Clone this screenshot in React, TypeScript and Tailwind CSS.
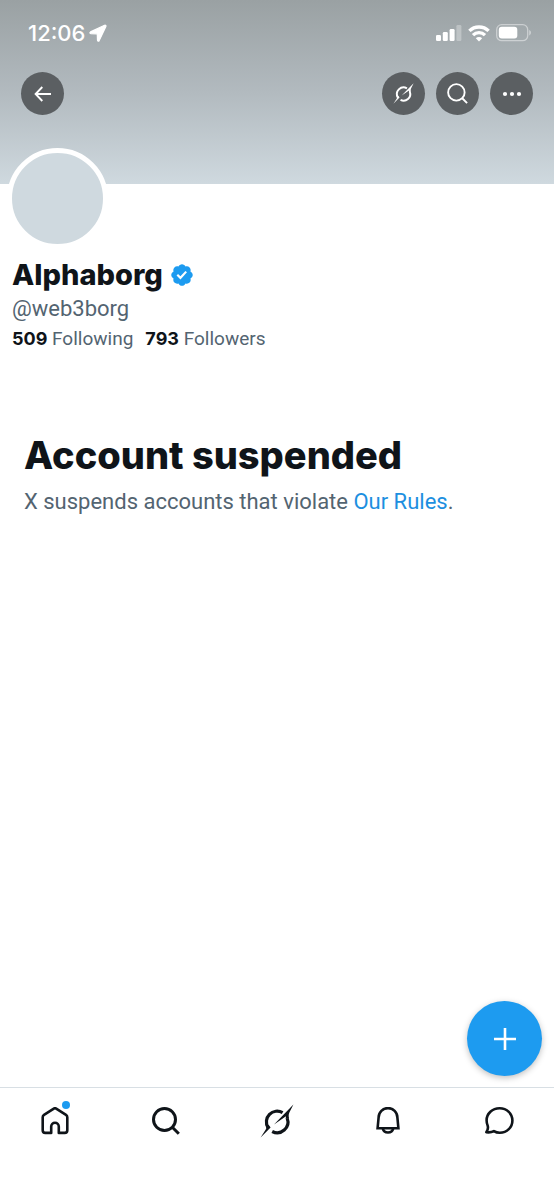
import type { ReactNode } from 'react';

interface IconProps {
  className?: string;
}

function LocationIcon({ className }: IconProps) {
  return (
    <svg viewBox="0 0 18 18" className={className} fill="currentColor" stroke="currentColor" strokeWidth="1.2" strokeLinejoin="round" aria-hidden="true">
      <path d="M15.6 1.2 1.5 7.9c-.9.5-.8 1.6.3 1.7l6 .2c.3 0 .5.2.5.5l.2 6c0 1.1 1.2 1.2 1.7.3L16.9 2.5c.4-.9-.4-1.700-1.300-1.300z" />
    </svg>
  );
}

function SignalIcon({ className }: IconProps) {
  return (
    <svg viewBox="0 0 26 17" className={className} fill="currentColor" aria-hidden="true">
      <rect x="0" y="10" width="5" height="6" rx="1.3" />
      <rect x="6.8" y="7" width="5" height="9" rx="1.3" />
      <rect x="13.6" y="4" width="5" height="12" rx="1.3" />
      <rect x="20.4" y="0" width="5" height="16" rx="1.3" opacity=".3" />
    </svg>
  );
}

function WifiIcon({ className }: IconProps) {
  return (
    <svg viewBox="0 0 22 17" className={className} fill="none" stroke="currentColor" strokeWidth="3.4" aria-hidden="true">
      <path d="M1.4 5.9a13.6 13.6 0 0 1 19.2 0" />
      <path d="M5 10.1a8.6 8.6 0 0 1 12 0" />
      <path d="m11 16.6-3.2-3.3a4.6 4.6 0 0 1 6.4 0z" fill="currentColor" stroke="none" />
    </svg>
  );
}

function BatteryIcon({ className }: IconProps) {
  return (
    <svg viewBox="0 0 36 18" className={className} fill="none" aria-hidden="true">
      <rect x=".7" y=".7" width="31" height="16" rx="5" stroke="currentColor" strokeWidth="1.3" opacity=".45" />
      <rect x="2.8" y="2.8" width="18.5" height="11.8" rx="3" fill="currentColor" />
      <path d="M33.2 6v5.4c1.1-.5 1.8-1.5 1.8-2.7s-.7-2.2-1.8-2.7z" fill="currentColor" opacity=".45" />
    </svg>
  );
}

function BackIcon({ className }: IconProps) {
  return (
    <svg viewBox="0 0 18 16" className={className} fill="none" stroke="currentColor" strokeWidth="1.9" aria-hidden="true">
      <path d="M8.3 1 1.6 8l6.7 7M1.8 8H17" />
    </svg>
  );
}

function GrokIcon({ className }: IconProps) {
  return (
    <svg viewBox="0 0 34 34" className={className} fill="currentColor" aria-hidden="true">
      {/* Split ring */}
      <g fill="none" stroke="currentColor" strokeWidth="3.2">
        <path d="M22.6 8.7A10.700 10.700 0 0 0 8 23.500" />
        <path d="M27.200 14.300A10.700 10.700 0 0 1 12.200 27.500" />
      </g>
      {/* Slash */}
      <path d="M.6 33.400 10.600 23.400 8.800 21 5.800 21.800c.8 2 .7 2.700-.2 4z" />
      <path d="M33.400.6 14 20.400 26 12.200l-.3 2.700 3.300-.9c-.6-2.600-.4-4.200 1-6.800z" />
    </svg>
  );
}

function SearchIcon({ className, thin }: IconProps & { thin?: boolean }) {
  return (
    <svg viewBox="0 0 28 28" className={className} fill="none" stroke="currentColor" strokeWidth={thin ? 2.5 : 3} aria-hidden="true">
      <circle cx="12.5" cy="12.5" r="11" />
      <path d="m20.3 20.3 6.5 6.5" />
    </svg>
  );
}

function MoreIcon({ className }: IconProps) {
  return (
    <svg viewBox="0 0 20 6" className={className} fill="currentColor" aria-hidden="true">
      <circle cx="3" cy="3" r="2.1" />
      <circle cx="10" cy="3" r="2.1" />
      <circle cx="17" cy="3" r="2.1" />
    </svg>
  );
}

function VerifiedIcon({ className }: IconProps) {
  return (
    <svg viewBox="1.5 1.5 21 21" className={className} fill="currentColor" role="img" aria-label="Verified account">
      <path d="M22.25 12c0-1.43-.88-2.67-2.19-3.34.46-1.39.2-2.9-.81-3.91s-2.52-1.27-3.91-.81c-.66-1.31-1.91-2.19-3.34-2.19s-2.67.88-3.33 2.19c-1.4-.46-2.91-.2-3.92.81s-1.26 2.52-.8 3.91c-1.31.67-2.2 1.91-2.2 3.34s.89 2.67 2.2 3.34c-.46 1.39-.21 2.9.8 3.91s2.52 1.26 3.91.81c.67 1.31 1.91 2.19 3.34 2.19s2.68-.88 3.34-2.19c1.39.45 2.9.2 3.91-.81s1.27-2.52.81-3.91c1.31-.67 2.19-1.91 2.19-3.34zm-11.71 4.2L6.8 12.46l1.41-1.42 2.26 2.26 4.8-5.23 1.47 1.36-6.2 6.77z" />
    </svg>
  );
}

function HomeIcon({ className }: IconProps) {
  return (
    <svg viewBox="0 0 28 28" className={className} fill="none" stroke="currentColor" strokeWidth="2.6" strokeLinejoin="round" aria-hidden="true">
      <path d="M12.8 1.6 3 7.8a2.8 2.8 0 0 0-1.3 2.4v13.1c0 1.5 1.1 2.6 2.6 2.6h5.9V19.5a3.8 3.8 0 0 1 7.6 0v6.4h5.9c1.5 0 2.6-1.1 2.6-2.6V10.2a2.8 2.8 0 0 0-1.3-2.4l-9.8-6.2a2.2 2.2 0 0 0-2.4 0z" />
    </svg>
  );
}

function BellIcon({ className }: IconProps) {
  return (
    <svg viewBox="0 0 28 28" className={className} fill="none" stroke="currentColor" strokeWidth="2.6" aria-hidden="true">
      <path d="M3.600 21.200 4.600 10.500a9.400 9.400 0 0 1 18.800 0l1 10.700z" />
      <path d="M8.800 21.500a5.300 5 0 0 0 10.400 0" />
    </svg>
  );
}

function MessageIcon({ className }: IconProps) {
  return (
    <svg viewBox="0 0 30 28" className={className} fill="none" stroke="currentColor" strokeWidth="2.6" strokeLinejoin="round" aria-hidden="true">
      <path d="M15.6 1.3c7.4 0 12.8 5.4 12.8 12.2s-5.4 12.3-12.6 12.3c-2.5 0-4.2-.6-5.9-1.7-1.8 1-4.3 1.5-7.6 1.1 1.6-2.2 2-4.3 1.4-6.4-.8-1.8-1.1-3.6-1.1-5.5C2.6 6.7 8.3 1.3 15.6 1.3z" />
    </svg>
  );
}

function RoundButton({ label, children }: { label: string; children: ReactNode }) {
  return (
    <button type="button" aria-label={label} className="flex size-[43px] items-center justify-center rounded-full bg-[#5b5f62] text-white">
      {children}
    </button>
  );
}

const tabs = [
  { label: 'Home', icon: <HomeIcon className="size-7" />, unread: true },
  { label: 'Search', icon: <SearchIcon className="size-7" /> },
  { label: 'Grok', icon: <GrokIcon className="size-[34px]" /> },
  { label: 'Notifications', icon: <BellIcon className="size-7" /> },
  { label: 'Messages', icon: <MessageIcon className="h-7 w-[30px]" /> },
];

export default function App() {
  return (
    <div className="flex min-h-screen flex-col bg-white font-[Roboto,sans-serif] text-[#0f1419]">
      <header className="bg-linear-to-b from-[#9aa1a3] via-[#b2babf] to-[#cfd9df] pb-[69px]">
        {/* Status bar */}
        <div className="flex h-[72px] items-center justify-between pr-[22px] pb-1.5 pl-7 text-white">
          <div className="flex items-center gap-1">
            <span className="font-[Inter,sans-serif] text-[22px] leading-7 font-medium">12:06</span>
            <LocationIcon className="size-[18px]" />
          </div>
          <div className="flex items-center gap-1.5">
            <SignalIcon className="h-[17px] w-[26px]" />
            <WifiIcon className="h-[17px] w-[22px]" />
            <BatteryIcon className="h-[18px] w-9" />
          </div>
        </div>

        <div className="flex items-center justify-between px-[21px]">
          <RoundButton label="Back">
            <BackIcon className="h-4 w-[18px]" />
          </RoundButton>
          <div className="flex gap-[11px]">
            <RoundButton label="Grok">
              <GrokIcon className="size-[21px]" />
            </RoundButton>
            <RoundButton label="Search">
              <SearchIcon thin className="size-[21px]" />
            </RoundButton>
            <RoundButton label="More">
              <MoreIcon className="h-1.5 w-5" />
            </RoundButton>
          </div>
        </div>
      </header>

      <main className="flex flex-1 flex-col">
        {/* Profile */}
        <section className="px-3">
          <div className="-mt-9 -ml-[5px] size-[101px] rounded-full border-5 border-white bg-[#cfd9df]" />
          <div className="mt-2 flex items-center gap-2">
            <h1 className="font-[Inter,sans-serif] text-[29px] leading-9 font-extrabold">Alphaborg</h1>
            <VerifiedIcon className="size-[22px] text-[#1d9bf0]" />
          </div>
          <p className="text-[22px] leading-8 text-[#536471]">@web3borg</p>
          <div className="flex gap-3 text-[19px] leading-7 text-[#536471]">
            <a href="#following"><b className="font-[Inter,sans-serif] text-lg leading-7 font-bold text-[#0f1419]">509</b> Following</a>
            <a href="#followers"><b className="font-[Inter,sans-serif] text-lg leading-7 font-bold text-[#0f1419]">793</b> Followers</a>
          </div>
        </section>

        <section className="px-6 pt-[77px]">
          <h2 className="font-[Inter,sans-serif] text-[38px] leading-[50px] font-extrabold">Account suspended</h2>
          <p className="mt-1.5 text-[22px] leading-8 text-[#536471]">
            X suspends accounts that violate <a href="#rules" className="text-[#1d8fe0]">Our Rules</a>.
          </p>
        </section>

        <button
          type="button"
          aria-label="New post"
          className="mt-auto mr-3 mb-[11px] flex size-[75px] items-center justify-center self-end rounded-full bg-[#1d9bf0] text-white shadow-[0_2px_6px_rgba(0,0,0,0.25)]"
        >
          <svg viewBox="0 0 22 22" className="size-[22px]" stroke="currentColor" strokeWidth="2.6" aria-hidden="true">
            <path d="M11 0v22M0 11h22" />
          </svg>
        </button>
      </main>

      <nav className="grid grid-cols-5 border-t border-[#d8dfe4] pb-[45px]">
        {tabs.map((tab) => (
          <a key={tab.label} href={`#${tab.label.toLowerCase()}`} aria-label={tab.label} className="flex h-[66px] items-center justify-center">
            <span className="relative">
              {tab.icon}
              {tab.unread && <span className="absolute -top-1.5 -right-px size-2 rounded-full bg-[#1d9bf0]" />}
            </span>
          </a>
        ))}
      </nav>
    </div>
  );
}
